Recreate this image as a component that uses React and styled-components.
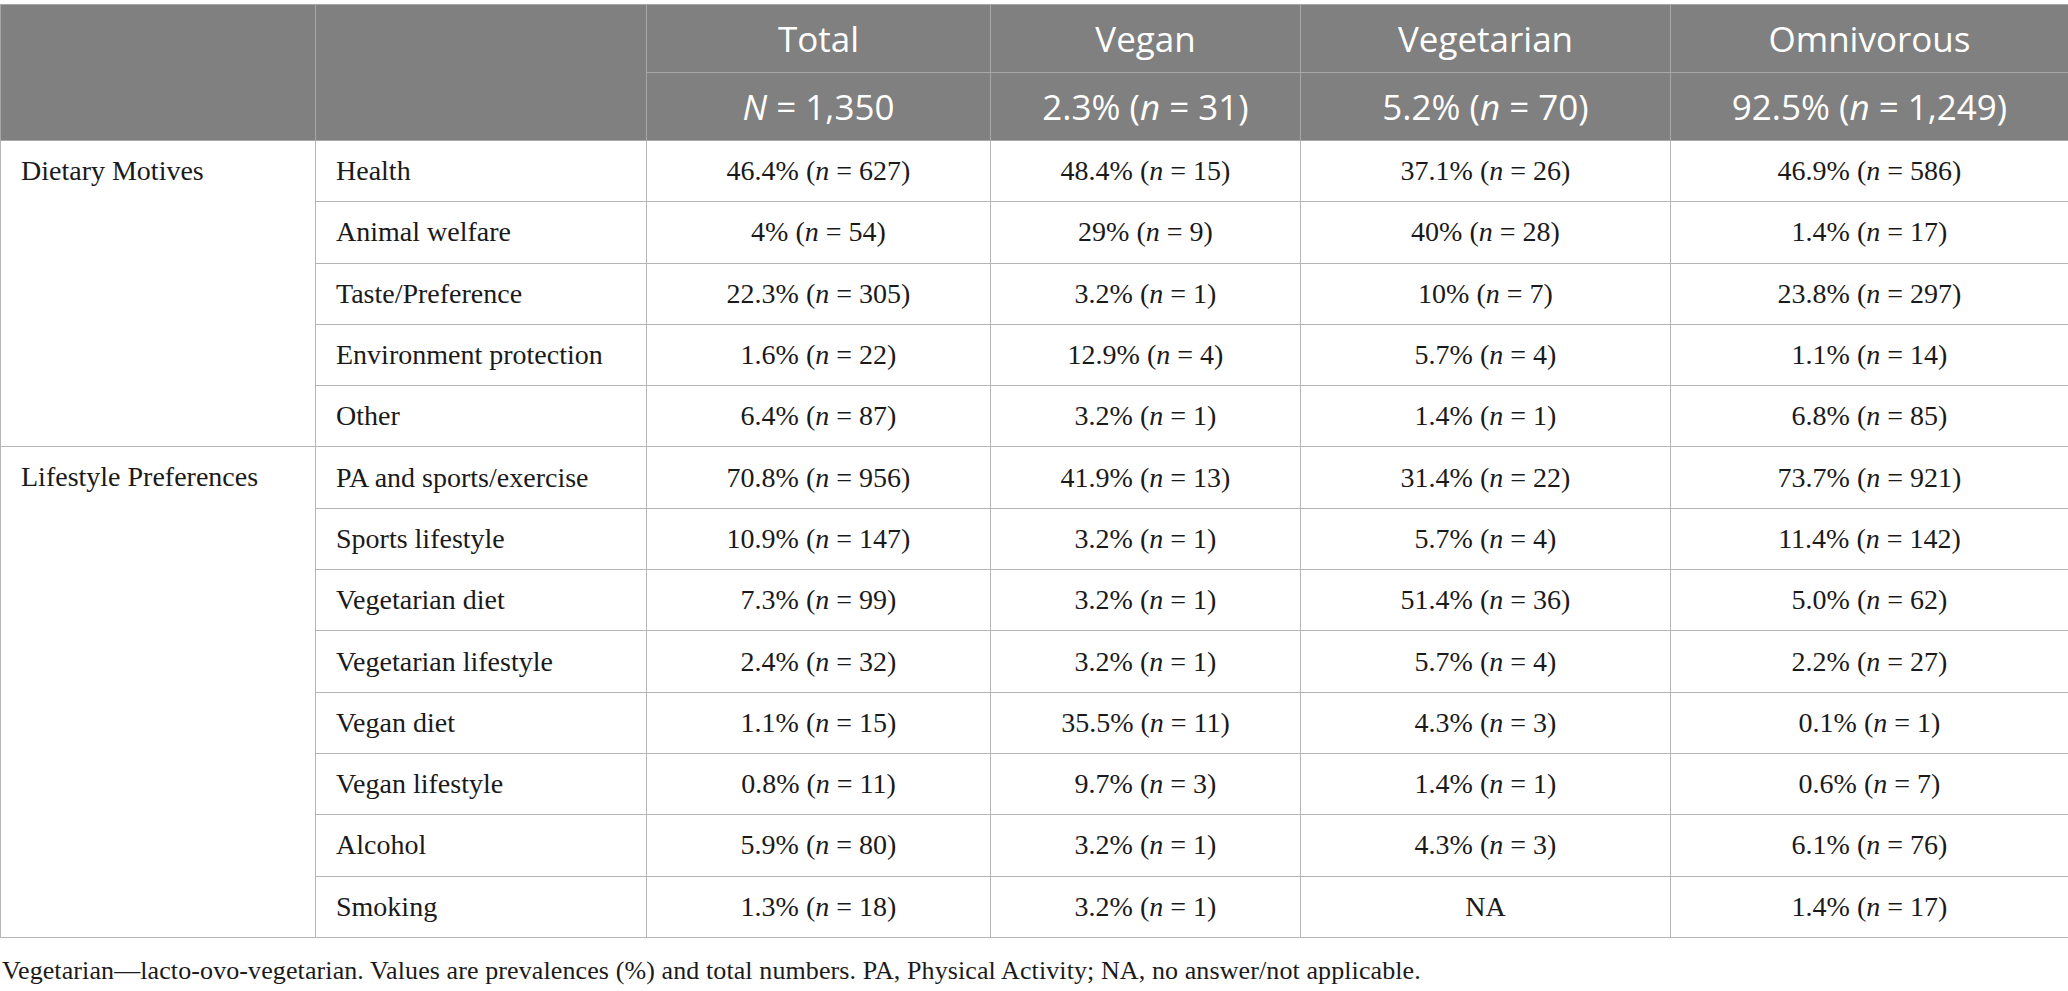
import React from "react";
import styled, { createGlobalStyle } from "styled-components";

const GlobalStyle = createGlobalStyle`
  html, body {
    margin: 0;
    padding: 0;
    background: #ffffff;
  }
`;

const columns = [315, 331, 344, 310, 370, 398];

const groups = [
  {
    label: "Dietary Motives",
    rows: [
      ["Health", ["46.4%", 627], ["48.4%", 15], ["37.1%", 26], ["46.9%", 586]],
      ["Animal welfare", ["4%", 54], ["29%", 9], ["40%", 28], ["1.4%", 17]],
      ["Taste/Preference", ["22.3%", 305], ["3.2%", 1], ["10%", 7], ["23.8%", 297]],
      ["Environment protection", ["1.6%", 22], ["12.9%", 4], ["5.7%", 4], ["1.1%", 14]],
      ["Other", ["6.4%", 87], ["3.2%", 1], ["1.4%", 1], ["6.8%", 85]],
    ],
  },
  {
    label: "Lifestyle Preferences",
    rows: [
      ["PA and sports/exercise", ["70.8%", 956], ["41.9%", 13], ["31.4%", 22], ["73.7%", 921]],
      ["Sports lifestyle", ["10.9%", 147], ["3.2%", 1], ["5.7%", 4], ["11.4%", 142]],
      ["Vegetarian diet", ["7.3%", 99], ["3.2%", 1], ["51.4%", 36], ["5.0%", 62]],
      ["Vegetarian lifestyle", ["2.4%", 32], ["3.2%", 1], ["5.7%", 4], ["2.2%", 27]],
      ["Vegan diet", ["1.1%", 15], ["35.5%", 11], ["4.3%", 3], ["0.1%", 1]],
      ["Vegan lifestyle", ["0.8%", 11], ["9.7%", 3], ["1.4%", 1], ["0.6%", 7]],
      ["Alcohol", ["5.9%", 80], ["3.2%", 1], ["4.3%", 3], ["6.1%", 76]],
      ["Smoking", ["1.3%", 18], ["3.2%", 1], null, ["1.4%", 17]],
    ],
  },
];

const App = () => {
  return (
    <Page>
      <GlobalStyle />
      <Table>
        <colgroup>
          {columns.map((w, i) => (
            <col key={i} style={{ width: `${w}px` }} />
          ))}
        </colgroup>
        <thead>
          <HeadRow>
            <HeadCell rowSpan={2} />
            <HeadCell rowSpan={2} />
            <HeadCell>Total</HeadCell>
            <HeadCell>Vegan</HeadCell>
            <HeadCell>Vegetarian</HeadCell>
            <HeadCell>Omnivorous</HeadCell>
          </HeadRow>
          <HeadRow>
            <HeadCell>
              <em>N</em> = 1,350
            </HeadCell>
            <HeadCell>
              2.3% (<em>n</em> = 31)
            </HeadCell>
            <HeadCell>
              5.2% (<em>n</em> = 70)
            </HeadCell>
            <HeadCell>
              92.5% (<em>n</em> = 1,249)
            </HeadCell>
          </HeadRow>
        </thead>
        <tbody>
          {groups.map((group) =>
            group.rows.map((row, i) => (
              <BodyRow key={group.label + row[0]}>
                {i === 0 && (
                  <GroupCell rowSpan={group.rows.length}>{group.label}</GroupCell>
                )}
                <LabelCell>{row[0]}</LabelCell>
                {row.slice(1).map((value, j) => (
                  <ValueCell key={j}>
                    {value ? (
                      <>
                        {value[0]} (<em>n</em> = {value[1]})
                      </>
                    ) : (
                      "NA"
                    )}
                  </ValueCell>
                ))}
              </BodyRow>
            ))
          )}
        </tbody>
      </Table>
      <Footnote>
        Vegetarian—lacto-ovo-vegetarian. Values are prevalences (%) and total
        numbers. PA, Physical Activity; NA, no answer/not applicable.
      </Footnote>
    </Page>
  );
};

const Page = styled.div`
  padding-top: 4px;
  width: 2068px;
  font-family: "Liberation Serif", "Times New Roman", serif;
  color: #1a1a1a;
`;

const Table = styled.table`
  width: 2067px;
  border-collapse: collapse;
  table-layout: fixed;
  border: 1px solid #b5b5b5;
`;

const HeadRow = styled.tr`
  height: 68px;
  background: #808080;
`;

const HeadCell = styled.th`
  border: 1px solid #a8a8a8;
  color: #ffffff;
  font-family: "Open Sans", "Lato", sans-serif;
  font-weight: 400;
  font-size: 35px;
  text-align: center;
  vertical-align: middle;
  padding: 0 10px;

  em {
    font-style: italic;
  }
`;

const BodyRow = styled.tr`
  height: 61.3px;
`;

const bodyCell = `
  border: 1px solid #b5b5b5;
  font-size: 28px;
  padding: 0 20px;
  vertical-align: middle;
  white-space: nowrap;
`;

const GroupCell = styled.td`
  ${bodyCell}
  vertical-align: top;
  padding-top: 14px;
  text-align: left;
`;

const LabelCell = styled.td`
  ${bodyCell}
  text-align: left;
`;

const ValueCell = styled.td`
  ${bodyCell}
  text-align: center;
`;

const Footnote = styled.p`
  margin: 18px 0 0 2px;
  font-size: 26px;
  letter-spacing: 0.1px;
  color: #1a1a1a;
  white-space: nowrap;
`;

export default App;
